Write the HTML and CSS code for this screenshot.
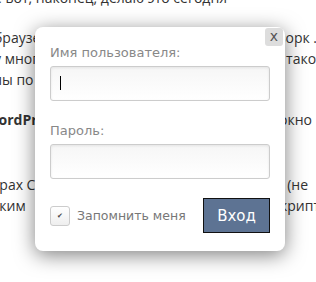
FILE: index.html
```html
<!DOCTYPE html>
<html lang="ru">
<head>
    <meta charset="UTF-8">
    <meta name="viewport" content="width=device-width, initial-scale=1.0">
    <title>Вход</title>
    <link rel="stylesheet" href="styles.css">
</head>
<body>
    <div class="post">
        <p class="first">е вот, наконец, делаю это сегодня</p>
        <p>
            <span class="ln"><span>браузере, который используют</span><span class="r2">фреймворк .</span></span>
            <span class="ln"><span>у многих людей, есть</span><span class="r3">такой</span></span>
            <span class="ln"><span>лы по умолчанию</span></span>
        </p>
        <p class="gap">
            <span class="ln"><b class="cut-w">WordPress</b><span class="r5">окно</span></span>
        </p>
        <p>
            <span class="ln"><span class="cut-b">браузерах Chrome</span><span class="r6">(не</span></span>
            <span class="ln"><span class="cut-t">таким&nbsp;&nbsp; образом</span><span class="r7">скрипт</span></span>
        </p>
    </div>

    <div class="overlay">
        <form class="login-box">
            <a href="#" class="close">x</a>

            <label class="label" for="user">Имя пользователя:</label>
            <div class="input-wrap">
                <input type="text" id="user" class="field">
                <span class="caret"></span>
            </div>

            <label class="label" for="pass">Пароль:</label>
            <input type="password" id="pass" class="field">

            <div class="bottom">
                <label class="remember">
                    <span class="check">&#10004;</span>
                    Запомнить меня
                </label>
                <button type="submit">Вход</button>
            </div>
        </form>
    </div>
</body>
</html>
```

FILE: styles.css
```css
* {
    margin: 0;
    padding: 0;
    box-sizing: border-box;
}

body {
    background: #fff;
    font-family: "Open Sans", sans-serif;
    font-size: 14px;
    color: #333;
    overflow: hidden;
    height: 282px;
}

/* текст статьи под окном */
.post {
    margin: -13px 0 0 -6px;
    width: 326px;
}

.post p {
    line-height: 21px;
    margin-bottom: 19px;
}

.post p.gap {
    margin-bottom: 44px;
}

.ln {
    display: flex;
    justify-content: space-between;
    white-space: nowrap;
}

.cut-w { margin-left: -9px; }
.cut-b { margin-left: -41px; }
.cut-t { margin-left: -9px; }

.r2 { margin-right: 3px; }
.r3 { margin-right: -5px; }
.r5 { margin-right: 8px; }
.r6 { margin-right: 12px; }
.r7 { margin-right: 0; }

/* окно входа */
.overlay {
    position: absolute;
    left: 35px;
    top: 27px;
}

.login-box {
    position: relative;
    width: 250px;
    background: #fff;
    border-radius: 8px;
    box-shadow: 0 4px 20px rgba(0, 0, 0, 0.5);
    padding: 17px 15px 18px;
    display: flex;
    flex-direction: column;
    font-family: "DejaVu Sans", Verdana, sans-serif;
}

.close {
    position: absolute;
    top: 1px;
    right: 2px;
    width: 18px;
    height: 18px;
    background: #ddd;
    border-radius: 3px;
    color: #555;
    font-size: 14px;
    line-height: 16px;
    text-align: center;
    text-decoration: none;
}

.label {
    font-size: 13px;
    line-height: 18px;
    color: #888;
    margin-bottom: 4px;
}

.input-wrap {
    position: relative;
}

.field {
    width: 100%;
    height: 35px;
    border: 1px solid #ccc;
    border-radius: 3px;
    background: linear-gradient(#f6f6f6, #fff);
    box-shadow: inset 0 1px 3px rgba(0, 0, 0, 0.08);
    outline: none;
    margin-bottom: 21px;
}

.caret {
    position: absolute;
    left: 10px;
    top: 10px;
    width: 1px;
    height: 14px;
    background: #000;
}

.bottom {
    display: flex;
    justify-content: space-between;
    align-items: center;
    margin-top: -2px;
}

.remember {
    display: flex;
    align-items: center;
    gap: 7px;
    font-size: 12.5px;
    color: #777;
}

.check {
    width: 20px;
    height: 20px;
    border: 1px solid #ccc;
    border-radius: 3px;
    background: linear-gradient(#fff, #eee);
    color: #444;
    font-size: 7px;
    line-height: 18px;
    text-align: center;
}

button {
    width: 67px;
    height: 35px;
    background: #5d7393;
    color: #fff;
    border: 1px solid #111;
    font-family: "DejaVu Sans", Verdana, sans-serif;
    font-size: 15px;
    cursor: pointer;
}
```
